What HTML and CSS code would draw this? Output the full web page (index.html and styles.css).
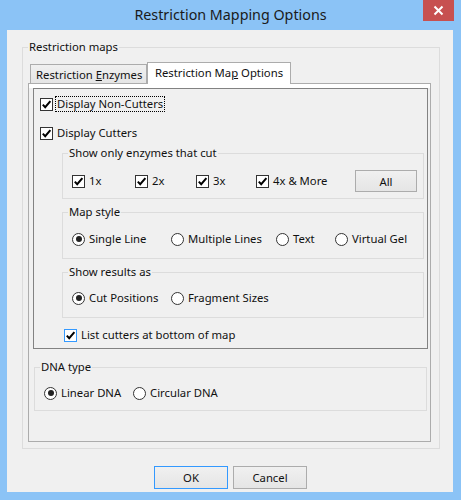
FILE: index.html
```html
<!DOCTYPE html>
<html>
<head>
<meta charset="utf-8">
<title>Restriction Mapping Options</title>
<link rel="stylesheet" href="styles.css">
</head>
<body>
<div class="window">
  <div class="titlebar">
    <div class="title">Restriction Mapping Options</div>
    <div class="close">
      <svg width="31" height="21" viewBox="0 0 31 21"><path d="M11.5 6.5 L19.5 14.5 M19.5 6.5 L11.5 14.5" stroke="#fff" stroke-width="2" fill="none"/></svg>
    </div>
  </div>
  <div class="client">
    <fieldset class="group outer">
      <legend>Restriction maps</legend>
      <div class="outer-body">
        <div class="tabs">
          <div class="tab">Restriction <u>E</u>nzymes</div>
          <div class="tab active">Restriction Ma<u>p</u> Options</div>
        </div>
        <div class="panel">
          <div class="frame">
            <div class="row r1">
              <span class="cb"><svg width="11" height="11" viewBox="0 0 11 11"><path d="M1.8 5.6 L4.2 8.2 L9.4 2.2" stroke="#000" stroke-width="2" fill="none"/></svg></span>
              <span class="lbl focus">Display Non-Cutters</span>
            </div>
            <div class="row r2">
              <span class="cb"><svg width="11" height="11" viewBox="0 0 11 11"><path d="M1.8 5.6 L4.2 8.2 L9.4 2.2" stroke="#000" stroke-width="2" fill="none"/></svg></span>
              <span class="lbl">Display Cutters</span>
            </div>

            <fieldset class="group sub g-cut">
              <legend>Show only enzymes that cut</legend>
              <div class="opts">
                <div class="item w63"><span class="cb"><svg width="11" height="11" viewBox="0 0 11 11"><path d="M1.8 5.6 L4.2 8.2 L9.4 2.2" stroke="#000" stroke-width="2" fill="none"/></svg></span><span class="lbl">1x</span></div>
                <div class="item w61"><span class="cb"><svg width="11" height="11" viewBox="0 0 11 11"><path d="M1.8 5.6 L4.2 8.2 L9.4 2.2" stroke="#000" stroke-width="2" fill="none"/></svg></span><span class="lbl">2x</span></div>
                <div class="item w60"><span class="cb"><svg width="11" height="11" viewBox="0 0 11 11"><path d="M1.8 5.6 L4.2 8.2 L9.4 2.2" stroke="#000" stroke-width="2" fill="none"/></svg></span><span class="lbl">3x</span></div>
                <div class="item"><span class="cb"><svg width="11" height="11" viewBox="0 0 11 11"><path d="M1.8 5.6 L4.2 8.2 L9.4 2.2" stroke="#000" stroke-width="2" fill="none"/></svg></span><span class="lbl">4x &amp; More</span></div>
                <div class="btn all">All</div>
              </div>
            </fieldset>

            <fieldset class="group sub g-style">
              <legend>Map style</legend>
              <div class="opts">
                <div class="item w99"><span class="rb on"></span><span class="lbl">Single Line</span></div>
                <div class="item w105"><span class="rb"></span><span class="lbl">Multiple Lines</span></div>
                <div class="item w59"><span class="rb"></span><span class="lbl">Text</span></div>
                <div class="item"><span class="rb"></span><span class="lbl">Virtual Gel</span></div>
              </div>
            </fieldset>

            <fieldset class="group sub g-res">
              <legend>Show results as</legend>
              <div class="opts">
                <div class="item w99"><span class="rb on"></span><span class="lbl">Cut Positions</span></div>
                <div class="item"><span class="rb"></span><span class="lbl">Fragment Sizes</span></div>
              </div>
            </fieldset>

            <div class="row r3">
              <span class="cb hover"><svg width="11" height="11" viewBox="0 0 11 11"><path d="M1.8 5.6 L4.2 8.2 L9.4 2.2" stroke="#000" stroke-width="2" fill="none"/></svg></span>
              <span class="lbl">List cutters at bottom of map</span>
            </div>
          </div>

          <fieldset class="group g-dna">
            <legend>DNA type</legend>
            <div class="opts">
              <div class="item w89"><span class="rb on"></span><span class="lbl">Linear DNA</span></div>
              <div class="item"><span class="rb"></span><span class="lbl">Circular DNA</span></div>
            </div>
          </fieldset>
        </div>
      </div>
    </fieldset>

    <div class="buttons">
      <div class="btn ok">OK</div>
      <div class="btn">Cancel</div>
    </div>
  </div>
</div>
</body>
</html>
```
FILE: styles.css
```css
* { box-sizing: border-box; }
html, body { margin: 0; padding: 0; }
body {
  width: 461px;
  height: 500px;
  overflow: hidden;
  font-family: "Noto Sans", "Liberation Sans", sans-serif;
  font-size: 11.3px;
  color: #111;
}
.window {
  width: 461px;
  height: 500px;
  background: #8bc3f6;
  display: flex;
  flex-direction: column;
}
.titlebar {
  height: 30px;
  flex: none;
  display: grid;
  grid-template-columns: 1fr auto 1fr;
  align-items: start;
}
.title {
  grid-column: 2;
  font-size: 14.3px;
  line-height: 29px;
  white-space: nowrap;
  color: #1a1a1a;
}
.close {
  grid-column: 3;
  justify-self: end;
  margin-right: 7px;
  width: 31px;
  height: 21px;
  background: #c75050;
}
.close svg { display: block; }
.client {
  flex: 1;
  margin: 0 8px 8px 7px;
  background: #f0f0f0;
  display: flex;
  flex-direction: column;
}
fieldset.group {
  margin: 0;
  padding: 0;
  border: 1px solid #dcdcdc;
  min-width: 0;
}
fieldset.group > legend {
  margin-left: 5px;
  padding: 0 1px;
  line-height: 16px;
}
fieldset.outer { margin: 9px 13px 0 15px; }
.outer-body { padding: 7px 8px 6px 5px; }

.tabs {
  display: flex;
  align-items: flex-end;
  height: 21px;
  margin-left: 2px;
}
.tab {
  height: 19px;
  width: 117px;
  border: 1px solid #acacac;
  border-bottom: none;
  background: linear-gradient(#f0f0f0, #e5e5e5);
  padding: 2px 0 0 5px;
  line-height: 16px;
  white-space: nowrap;
}
.tab.active {
  width: 144px;
  height: 22px;
  margin-bottom: -1px;
  background: #fff;
  padding: 2px 0 0 0;
  text-align: center;
  position: relative;
  z-index: 1;
}
.panel {
  border: 1px solid #acacac;
  background: linear-gradient(#fff 0, #fff 4px, #f0f0f0 4px);
  padding: 4px 2px 30px 4px;
}
.frame {
  border: 1px solid #828282;
  padding: 7px 0 5px 0;
}
.row { display: flex; align-items: center; }
.r1 { margin-left: 6px; }
.r2 { margin-left: 6px; margin-top: 13px; height: 16px; }
.r3 { margin-left: 30px; margin-top: 9px; height: 16px; }

.cb {
  flex: none;
  width: 13px;
  height: 13px;
  border: 1px solid #333;
  background: #fff;
}
.cb svg { display: block; }
.cb.hover { border-color: #3399ff; }
.rb {
  flex: none;
  width: 13px;
  height: 13px;
  border: 1px solid #333;
  border-radius: 50%;
  background: #fff;
  display: grid;
  place-items: center;
}
.rb.on::after {
  content: "";
  width: 6px;
  height: 6px;
  border-radius: 50%;
  background: #222;
}
.lbl {
  margin-left: 4px;
  line-height: 16px;
  white-space: nowrap;
}
.lbl.focus {
  margin-left: 2px;
  padding: 0 1px;
  line-height: 14px;
  border: 1px dotted #000;
}

fieldset.sub { margin: 5px 3px 0 28px; }
fieldset.g-cut { margin-top: 4px; }
.opts { display: flex; align-items: center; padding-left: 9px; }
.g-cut .opts { margin: 9px 0 6px; height: 22px; }
.g-style .opts { margin: 11px 0 11px; height: 16px; }
.g-res .opts { margin: 10px 0 11px; height: 16px; }
fieldset.g-dna { margin: 10px 1px 0 1px; }
.g-dna .opts { margin: 10px 0 9px; height: 16px; }

.item { display: flex; align-items: center; flex: none; }
.w59 { width: 59px; }
.w60 { width: 60px; }
.w61 { width: 61px; }
.w63 { width: 63px; }
.w89 { width: 89px; }
.w99 { width: 99px; }
.w105 { width: 105px; }

.btn {
  border: 1px solid #acacac;
  background: linear-gradient(#f0f0f0, #e5e5e5);
  display: flex;
  align-items: center;
  justify-content: center;
  white-space: nowrap;
}
.btn.all {
  margin-left: auto;
  margin-right: 6px;
  width: 62px;
  height: 22px;
}
.buttons {
  display: flex;
  gap: 5px;
  margin-top: 17px;
  padding-left: 147px;
}
.buttons .btn { width: 74px; height: 23px; }
.btn.ok { border-color: #3399ff; }
```
